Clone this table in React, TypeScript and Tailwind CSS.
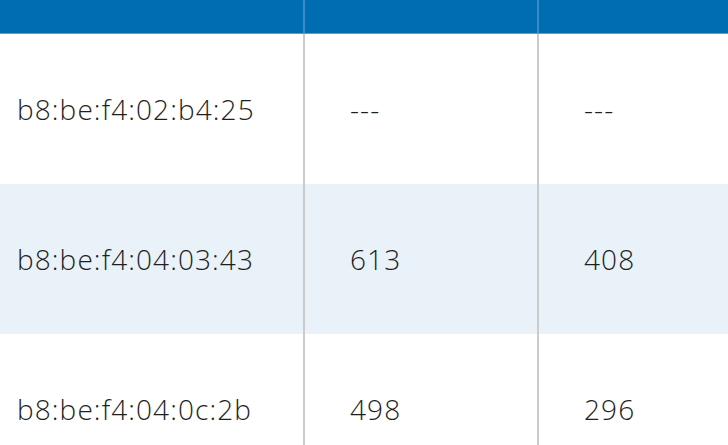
import React from 'react';

const rows = [
  { mac: 'b8:be:f4:02:b4:25', a: '---', b: '---' },
  { mac: 'b8:be:f4:04:03:43', a: '613', b: '408' },
  { mac: 'b8:be:f4:04:0c:2b', a: '498', b: '296' },
];

export default function App() {
  return (
    <div
      className="w-[728px] h-[445px] overflow-hidden bg-white text-[#1f1f1f]"
      style={{ fontFamily: '"Open Sans", "Noto Sans", sans-serif' }}
    >
      {/* Header */}
      <div className="flex h-[34px] bg-[#006db3] border-b border-[#4ea3dc]">
        <div className="w-[305px] border-r-2 border-[#3a8ac6]" />
        <div className="w-[234px] border-r-2 border-[#3a8ac6]" />
        <div className="flex-1" />
      </div>

      {/* Body */}
      {rows.map((row, i) => (
        <div
          key={row.mac}
          className={`flex h-[150px] text-[28px] font-[350] tracking-[1.1px] ${
            i % 2 === 1 ? 'bg-[#eaf2f9]' : 'bg-white'
          }`}
        >
          <div className="w-[305px] flex items-center pl-[17px] border-r-2 border-[#cbcbcb]">
            {row.mac}
          </div>
          <div className="w-[234px] flex items-center pl-[45px] border-r-2 border-[#cbcbcb]">
            {row.a}
          </div>
          <div className="flex-1 flex items-center pl-[45px]">{row.b}</div>
        </div>
      ))}
    </div>
  );
}
